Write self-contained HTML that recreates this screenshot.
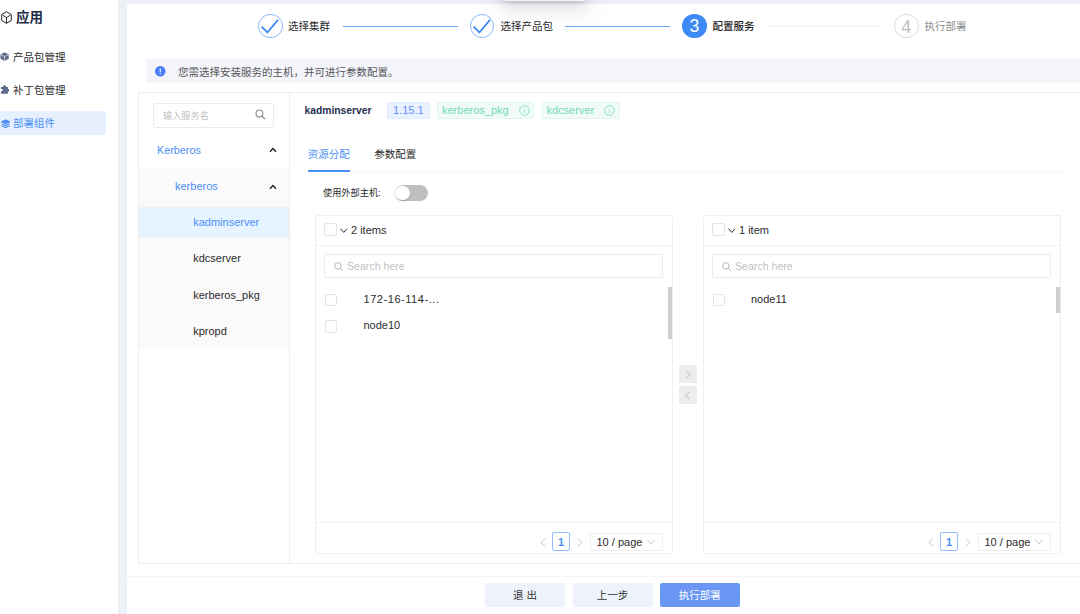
<!DOCTYPE html>
<html lang="zh-CN">
<head>
<meta charset="utf-8">
<title>部署组件</title>
<style>
*{box-sizing:border-box;margin:0;padding:0}
html,body{width:1080px;height:614px;overflow:hidden}
body{background:#eef0f7;font-family:"Liberation Sans","Noto Sans CJK SC",sans-serif;font-size:11px;color:#2b2b2b;position:relative}
.abs{position:absolute}
.t{position:absolute;white-space:nowrap;line-height:14px;height:14px;font-size:11px}
.zh{font-size:10.5px}
.blue{color:#4a8ff7}
/* sidebar */
#side{left:0;top:0;width:117.5px;height:614px;background:#fff}
#side .title{left:16px;top:10px;font-size:13.5px;font-weight:bold;color:#222b45;line-height:16px;height:16px}
#side .mi{left:13px}
#side .act{left:0;top:111px;width:106px;height:24px;background:#e6f0ff;border-radius:0 3px 3px 0}
/* card */
#card{left:126.5px;top:4.3px;width:960px;height:620px;background:#fff}
/* steps */
.sc{width:24.6px;height:24.6px;border-radius:50%;top:13.8px}
.sc.done{border:1px solid #8cb9ff;background:#fff}
.sc.cur{background:#3d8af7;color:#fff;font-size:17.5px;text-align:center;line-height:25px}
.sc.wait{border:1px solid #d9d9d9;color:#bfbfbf;font-size:18px;text-align:center;line-height:25px;background:#fff}
.sl{height:1px;top:26px}
.st{top:19px}
/* alert */
#alert{left:146px;top:59px;width:940px;height:24px;background:#f4f5fa}
/* box */
#box{left:138px;top:92px;width:960px;height:472px;border:1px solid #eeeeee;background:#fff}
#vdiv{left:289px;top:92px;width:1px;height:472px;background:#eeeeee}
.inp{border:1px solid #ebebeb;border-radius:2px;background:#fff}
.ph{color:#bfbfbf}
.tag{height:17.5px;top:101.5px;border-radius:2px;white-space:nowrap}
.tag.b{background:#e9f1fe;border:1px solid #e0ecff;color:#5b8ff9}
.tag.g{background:#f0fbf7;border:1px solid #e0f6ee;color:#7ddcbb}
.list{border:1px solid #f0f0f0;border-radius:2px;background:#fff;top:215px;width:358px;height:339px}
.cb{width:12.5px;height:12.5px;border:1px solid #e4e4e4;border-radius:2px;background:#fff}
.hl{height:1px;background:#ebebeb}
.pbtn{top:582.8px;width:80.3px;height:24px;border-radius:2px;text-align:center}
.op{left:679px;width:18px;height:18px;background:#ededed;border-radius:2px}
.pg1{top:532.2px;width:18px;height:18.5px;border:1px solid #93bcff;border-radius:2px;background:#fff}
.psz{top:533px;width:73px;height:18px;border:1px solid #eeeeee;border-radius:1px;background:#fff}
</style>
</head>
<body>
<div id="side" class="abs">
  <svg class="abs" style="left:1px;top:10.8px" width="11" height="13" viewBox="0 0 11 13" fill="none" stroke="#2b2b2b" stroke-width="1"><path d="M5.5 0.7 L10.3 3.5 V9.5 L5.5 12.3 L0.7 9.5 V3.5 Z M1.6 4.1 L5.5 6.5 L9.4 4.1 M5.5 6.5 V12.3"/></svg>
  <div class="t title">应用</div>
  <div class="abs act"></div>
  <svg class="abs" style="left:0px;top:52.3px" width="9.2" height="9.2" viewBox="0 0 10 10"><path d="M5 0.3 L9.5 2.6 V7.4 L5 9.7 L0.5 7.4 V2.6 Z" fill="#5d6a89"/><path d="M0.7 2.8 L5 5 L9.3 2.8 M5 5 V9.5" stroke="#fff" stroke-width="0.7" fill="none"/></svg>
  <div class="t mi zh" style="top:50px">产品包管理</div>
  <svg class="abs" style="left:0px;top:85.3px" width="9.2" height="9.2" viewBox="0 0 10 10"><path d="M3.6 2.2 a1.5 1.5 0 1 1 2.8 0 H8.6 V4.6 a1.4 1.4 0 1 1 0 2.6 V9.6 H1 V6.6 a1.3 1.3 0 1 0 0 -2.2 V2.2 Z" fill="#5d6a89"/></svg>
  <div class="t mi zh" style="top:83px">补丁包管理</div>
  <svg class="abs" style="left:0.5px;top:118.8px" width="9.2" height="9.2" viewBox="0 0 10 10" fill="none" stroke="#4a8ff7" stroke-width="1.2"><path d="M5 1 L9.3 3 L5 5 L0.7 3 Z" fill="#4a8ff7"/><path d="M0.7 5.2 L5 7.2 L9.3 5.2 M0.7 7.3 L5 9.3 L9.3 7.3"/></svg>
  <div class="t mi zh blue" style="top:116px">部署组件</div>
</div>

<div id="card" class="abs"></div>
<div class="abs" style="left:503px;top:-29px;width:83px;height:30px;border-radius:3px;background:#f4f4f6;box-shadow:0 3px 5px -3px rgba(0,0,0,.16),0 5px 14px rgba(0,0,0,.10),0 8px 24px 7px rgba(0,0,0,.05)"></div>

<!-- steps -->
<div class="abs sc done" style="left:258px"><svg class="abs" style="left:0;top:0" width="22.5" height="22.5" viewBox="0 0 22.5 22.5" fill="none" stroke="#3d8af7" stroke-width="1.8"><path d="M2.6 11.6 L8.4 17.5 L19 4.8"/></svg></div>
<div class="t st zh" style="left:288px">选择集群</div>
<div class="abs sl" style="left:343px;width:115px;background:#6ba6f9"></div>
<div class="abs sc done" style="left:469.8px"><svg class="abs" style="left:0;top:0" width="22.5" height="22.5" viewBox="0 0 22.5 22.5" fill="none" stroke="#3d8af7" stroke-width="1.8"><path d="M2.6 11.6 L8.4 17.5 L19 4.8"/></svg></div>
<div class="t st zh" style="left:500.5px">选择产品包</div>
<div class="abs sl" style="left:565px;width:105px;background:#6ba6f9"></div>
<div class="abs sc cur" style="left:682.2px">3</div>
<div class="t st zh" style="left:712.5px;font-weight:500;color:#1f1f1f">配置服务</div>
<div class="abs sl" style="left:767px;width:116px;background:#efefef"></div>
<div class="abs sc wait" style="left:894px">4</div>
<div class="t st zh" style="left:924.5px;color:#8c8c8c">执行部署</div>

<!-- alert -->
<div id="alert" class="abs"></div>
<svg class="abs" style="left:155px;top:66px" width="10.5" height="10.5" viewBox="0 0 10.5 10.5"><circle cx="5.25" cy="5.25" r="5.25" fill="#4a7cf7"/><path d="M5.25 2.4 V6.2 M5.25 7.3 V8.3" stroke="#fff" stroke-width="1.1"/></svg>
<div class="t zh" style="left:178px;top:64.5px;color:#555">您需选择安装服务的主机，并可进行参数配置。</div>

<!-- box -->
<div id="box" class="abs"></div>
<div id="vdiv" class="abs"></div>

<!-- left menu -->
<div class="abs inp" style="left:153px;top:103px;width:121px;height:24.5px"></div>
<div class="t ph" style="left:163px;top:108.5px;font-size:9.2px">输入服务名</div>
<svg class="abs" style="left:254.5px;top:109.2px" width="11" height="11" viewBox="0 0 11 11" fill="none" stroke="#8c8c8c" stroke-width="1.15"><circle cx="4.4" cy="4.4" r="3.4"/><path d="M7 7 L10 10"/></svg>
<div class="t blue" style="left:157px;top:143px;font-size:10.8px">Kerberos</div>
<svg class="abs" style="left:268.5px;top:147px" width="8" height="6" viewBox="0 0 8 6" fill="none" stroke="#222" stroke-width="1.4"><path d="M1 4.8 L4 1.6 L7 4.8"/></svg>
<div class="abs" style="left:139px;top:168px;width:150px;height:181px;background:#fafafa"></div>
<div class="t blue" style="left:175px;top:179px">kerberos</div>
<svg class="abs" style="left:268.5px;top:184px" width="8" height="6" viewBox="0 0 8 6" fill="none" stroke="#222" stroke-width="1.4"><path d="M1 4.8 L4 1.6 L7 4.8"/></svg>
<div class="abs" style="left:139px;top:207px;width:150px;height:30.5px;background:#e6f4ff"></div>
<div class="t blue" style="left:193.2px;top:214.8px">kadminserver</div>
<div class="t" style="left:193.2px;top:250.8px">kdcserver</div>
<div class="t" style="left:193.2px;top:287.5px">kerberos_pkg</div>
<div class="t" style="left:193.2px;top:323.7px">kpropd</div>

<!-- right header -->
<div class="t" style="left:304.5px;top:103.5px;font-weight:bold;color:#283150;font-size:10.3px">kadminserver</div>
<div class="abs tag b" style="left:387px;width:42.5px"></div>
<div class="t" style="left:393px;top:103px;color:#5b8ff9">1.15.1</div>
<div class="abs tag g" style="left:437px;width:97px"></div>
<div class="t" style="left:442px;top:103px;color:#72d8b4">kerberos_pkg</div>
<svg class="abs" style="left:518.5px;top:104.7px" width="11" height="11" viewBox="0 0 11 11" fill="none" stroke="#7ddcbb" stroke-width="0.9"><circle cx="5.5" cy="5.5" r="4.8"/><path d="M5.5 4.8 V8 M5.5 2.9 V3.8"/></svg>
<div class="abs tag g" style="left:541.5px;width:78.5px"></div>
<div class="t" style="left:546.5px;top:103px;color:#72d8b4">kdcserver</div>
<svg class="abs" style="left:604px;top:104.7px" width="11" height="11" viewBox="0 0 11 11" fill="none" stroke="#7ddcbb" stroke-width="0.9"><circle cx="5.5" cy="5.5" r="4.8"/><path d="M5.5 4.8 V8 M5.5 2.9 V3.8"/></svg>

<!-- tabs -->
<div class="t zh blue" style="left:307.7px;top:147px">资源分配</div>
<div class="t zh" style="left:374.2px;top:147px">参数配置</div>
<div class="abs hl" style="left:307.7px;top:171px;width:760px;background:#f5f5f5"></div>
<div class="abs" style="left:307.7px;top:169.5px;width:42.5px;height:2px;background:#4a8ff7"></div>

<div class="t" style="left:323px;top:186px;font-size:9.2px">使用外部主机:</div>
<div class="abs" style="left:394.7px;top:185px;width:33.3px;height:16px;border-radius:8px;background:#bfbfbf"><div class="abs" style="left:0.8px;top:0.8px;width:14.4px;height:14.4px;border-radius:50%;background:#fff;box-shadow:0 1px 2px rgba(0,0,0,.2)"></div></div>

<!-- left list -->
<div class="abs list" style="left:315px"></div>
<div class="abs cb" style="left:324.3px;top:223.3px"></div>
<svg class="abs" style="left:340.2px;top:227.5px" width="7.5" height="5.5" viewBox="0 0 7.5 5.5" fill="none" stroke="#333" stroke-width="1"><path d="M0.5 0.7 L3.75 4.4 L7 0.7"/></svg>
<div class="t" style="left:351px;top:223px">2 items</div>
<div class="abs hl" style="left:316px;top:245px;width:356px;background:#f0f0f0"></div>
<div class="abs inp" style="left:324.3px;top:254px;width:339px;height:24px"></div>
<svg class="abs" style="left:334px;top:261.5px" width="9.5" height="9.5" viewBox="0 0 9.5 9.5" fill="none" stroke="#b4b4b4" stroke-width="1"><circle cx="3.9" cy="3.9" r="3.2"/><path d="M6.3 6.3 L9 9"/></svg>
<div class="t ph" style="left:347px;top:259px;font-size:10.6px">Search here</div>
<div class="abs cb" style="left:324.5px;top:293.7px"></div>
<div class="t" style="left:363.5px;top:292px;letter-spacing:.55px">172-16-114-...</div>
<div class="abs cb" style="left:324.5px;top:320px"></div>
<div class="t" style="left:363.5px;top:318.2px">node10</div>
<div class="abs" style="left:668px;top:287px;width:4px;height:52px;background:#cfcfcf"></div>
<div class="abs hl" style="left:316px;top:522px;width:356px;background:#f0f0f0"></div>
<svg class="abs" style="left:540.3px;top:537.5px" width="6" height="9" viewBox="0 0 6 9" fill="none" stroke="#bfbfbf" stroke-width="0.9"><path d="M5.3 0.5 L0.8 4.5 L5.3 8.5"/></svg>
<div class="abs pg1" style="left:552px"></div>
<div class="t blue" style="left:552px;top:534.7px;width:18px;text-align:center;font-weight:bold">1</div>
<svg class="abs" style="left:576.5px;top:537.5px" width="6" height="9" viewBox="0 0 6 9" fill="none" stroke="#bfbfbf" stroke-width="0.9"><path d="M0.7 0.5 L5.2 4.5 L0.7 8.5"/></svg>
<div class="abs psz" style="left:590px"></div>
<div class="t" style="left:596.5px;top:535px">10 / page</div>
<svg class="abs" style="left:646.5px;top:539px" width="8" height="6" viewBox="0 0 8 6" fill="none" stroke="#c4c4c4" stroke-width="0.9"><path d="M0.4 0.5 L4 5.2 L7.6 0.5"/></svg>

<!-- ops -->
<div class="abs op" style="top:365px"><svg class="abs" style="left:6px;top:4.5px" width="7" height="9" viewBox="0 0 7 9" fill="none" stroke="#b8b8b8" stroke-width="0.9"><path d="M0.8 0.6 L5.6 4.5 L0.8 8.4"/></svg></div>
<div class="abs op" style="top:386px"><svg class="abs" style="left:5px;top:4.5px" width="7" height="9" viewBox="0 0 7 9" fill="none" stroke="#b8b8b8" stroke-width="0.9"><path d="M6.2 0.6 L1.4 4.5 L6.2 8.4"/></svg></div>

<!-- right list -->
<div class="abs list" style="left:703px"></div>
<div class="abs cb" style="left:712.3px;top:223.3px"></div>
<svg class="abs" style="left:728.2px;top:227.5px" width="7.5" height="5.5" viewBox="0 0 7.5 5.5" fill="none" stroke="#333" stroke-width="1"><path d="M0.5 0.7 L3.75 4.4 L7 0.7"/></svg>
<div class="t" style="left:739px;top:223px">1 item</div>
<div class="abs hl" style="left:704px;top:245px;width:356px;background:#f0f0f0"></div>
<div class="abs inp" style="left:712.3px;top:254px;width:339px;height:24px"></div>
<svg class="abs" style="left:722px;top:261.5px" width="9.5" height="9.5" viewBox="0 0 9.5 9.5" fill="none" stroke="#b4b4b4" stroke-width="1"><circle cx="3.9" cy="3.9" r="3.2"/><path d="M6.3 6.3 L9 9"/></svg>
<div class="t ph" style="left:735px;top:259px;font-size:10.6px">Search here</div>
<div class="abs cb" style="left:712.5px;top:293.7px"></div>
<div class="t" style="left:751px;top:292px">node11</div>
<div class="abs" style="left:1056px;top:287px;width:4px;height:26px;background:#cfcfcf"></div>
<div class="abs hl" style="left:704px;top:522px;width:356px;background:#f0f0f0"></div>
<svg class="abs" style="left:928.3px;top:537.5px" width="6" height="9" viewBox="0 0 6 9" fill="none" stroke="#bfbfbf" stroke-width="0.9"><path d="M5.3 0.5 L0.8 4.5 L5.3 8.5"/></svg>
<div class="abs pg1" style="left:940px"></div>
<div class="t blue" style="left:940px;top:534.7px;width:18px;text-align:center;font-weight:bold">1</div>
<svg class="abs" style="left:964.5px;top:537.5px" width="6" height="9" viewBox="0 0 6 9" fill="none" stroke="#bfbfbf" stroke-width="0.9"><path d="M0.7 0.5 L5.2 4.5 L0.7 8.5"/></svg>
<div class="abs psz" style="left:978px"></div>
<div class="t" style="left:984.5px;top:535px">10 / page</div>
<svg class="abs" style="left:1034.5px;top:539px" width="8" height="6" viewBox="0 0 8 6" fill="none" stroke="#c4c4c4" stroke-width="0.9"><path d="M0.4 0.5 L4 5.2 L7.6 0.5"/></svg>

<!-- bottom -->
<div class="abs hl" style="left:126.5px;top:576px;width:960px;background:#f4f4f4"></div>
<div class="abs pbtn" style="left:485px;background:#eef2fb"></div>
<div class="t zh" style="left:485px;top:587.7px;width:80px;text-align:center;color:#333">退 出</div>
<div class="abs pbtn" style="left:572.6px;background:#eef2fb"></div>
<div class="t zh" style="left:572.6px;top:587.7px;width:80px;text-align:center;color:#333">上一步</div>
<div class="abs pbtn" style="left:659.7px;background:#6b96f5"></div>
<div class="t zh" style="left:659.7px;top:587.7px;width:80px;text-align:center;color:#fff">执行部署</div>
</body>
</html>
